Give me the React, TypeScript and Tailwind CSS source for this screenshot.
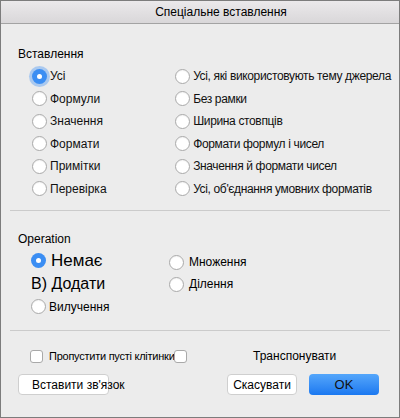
import React from "react";

function Radio({ checked, glow }: { checked?: boolean; glow?: boolean }) {
  if (checked) {
    return (
      <span
        className={`relative flex h-[15px] w-[15px] shrink-0 items-center justify-center rounded-full bg-[#3b8ef3] ${
          glow ? "shadow-[0_0_0_3px_rgba(90,160,245,0.45)]" : ""
        }`}
      >
        <span className="h-[5px] w-[5px] rounded-full bg-white" />
      </span>
    );
  }
  return (
    <span className="h-[15px] w-[15px] shrink-0 rounded-full border border-[#a9a9a9] bg-white shadow-[inset_0_1px_1px_rgba(0,0,0,0.05)]" />
  );
}

function Option({
  label,
  checked,
  glow,
  className,
}: {
  label: string;
  checked?: boolean;
  glow?: boolean;
  className?: string;
}) {
  return (
    <div className="flex h-[22.5px] items-center gap-[3px] whitespace-nowrap">
      <Radio checked={checked} glow={glow} />
      <span className={className ?? "text-[12px] text-[#111]"}>{label}</span>
    </div>
  );
}

function Checkbox() {
  return (
    <span className="relative h-[13px] w-[13px] shrink-0 rounded-[3px] border border-[#a9a9a9] bg-white" />
  );
}

export default function App() {
  const left = ["Усі", "Формули", "Значення", "Формати", "Примітки", "Перевірка"];
  const right = [
    "Усі, які використовують тему джерела",
    "Без рамки",
    "Ширина стовпців",
    "Формати формул і чисел",
    "Значення й формати чисел",
    "Усі, об'єднання умовних форматів",
  ];

  return (
    <div
      className="flex h-[418px] w-[400px] flex-col overflow-hidden border border-[#7c7c7c] bg-[#ececec] text-black"
      style={{ fontFamily: '"Liberation Sans", Arial, sans-serif' }}
    >
      <div className="flex h-[23px] shrink-0 items-center justify-center border-b border-[#a3a3a3] bg-gradient-to-b from-[#ebe9eb] to-[#d9d7d9] pl-[42px] text-[12px]">
        Спеціальне вставлення
      </div>

      <div className="flex flex-col px-[8px]">
        <div className="mt-[22px] pl-[9px] text-[12px] leading-[16px]">Вставлення</div>

        <div className="mt-[3px] flex">
          <div className="flex w-[167px] flex-col pl-[23px]">
            {left.map((l, i) => (
              <Option key={l} label={l} checked={i === 0} glow={i === 0} />
            ))}
          </div>
          <div className="flex flex-col">
            {right.map((l) => (
              <Option
                key={l}
                label={l}
                className="text-[12px] tracking-[-0.35px] text-[#111]"
              />
            ))}
          </div>
        </div>

        <div className="mx-[1px] mt-[10px] h-px bg-[#cbcbcb]" />

        <div className="mt-[20px] pl-[9px] text-[12px] leading-[16px]">Operation</div>

        <div className="mt-[2px] flex">
          <div className="flex w-[160px] flex-col">
            <div className="flex h-[23px] items-center gap-[5px] pl-[22px]">
              <Radio checked />
              <span className="text-[17px] font-medium">Немає</span>
            </div>
            <div className="flex h-[23px] items-center pl-[22px] text-[16px]">В) Додати</div>
            <div className="flex h-[23px] items-center gap-[3px] pl-[22px]">
              <Radio />
              <span className="text-[12px]">Вилучення</span>
            </div>
          </div>
          <div className="flex flex-col pt-[2px]">
            <div className="flex h-[22px] items-center gap-[5px]">
              <Radio />
              <span className="text-[12px]">Множення</span>
            </div>
            <div className="flex h-[22px] items-center gap-[5px]">
              <Radio />
              <span className="text-[12px]">Ділення</span>
            </div>
          </div>
        </div>

        <div className="mx-[1px] mt-[12px] h-px bg-[#cbcbcb]" />

        <div className="mt-[17px] flex h-[16px] items-center whitespace-nowrap pl-[21px]">
          <Checkbox />
          <span className="ml-[6px] w-[125px] text-[11px] tracking-[-0.25px]">Пропустити пусті клітинки</span>
          <Checkbox />
          <span className="ml-[66px] text-[12px]">Транспонувати</span>
        </div>

        <div className="mt-[10px] flex h-[21px] items-center pl-[9px] pr-[12px]">
          <button className="flex h-[21px] w-[91px] items-center justify-start whitespace-nowrap rounded-[4px] border border-[#cfcfcf] bg-white pl-[13px] text-[12px]">
            Вставити зв'язок
          </button>
          <div className="flex-1" />
          <button className="flex h-[21px] w-[70px] items-center justify-center rounded-[4px] border border-[#cfcfcf] bg-white text-[12px]">
            Скасувати
          </button>
          <button className="ml-[12px] flex h-[21px] w-[70px] items-center justify-center rounded-[4px] bg-gradient-to-b from-[#54a6fb] to-[#1a78f0] text-[13px] text-[#111]">
            OK
          </button>
        </div>
      </div>
    </div>
  );
}
